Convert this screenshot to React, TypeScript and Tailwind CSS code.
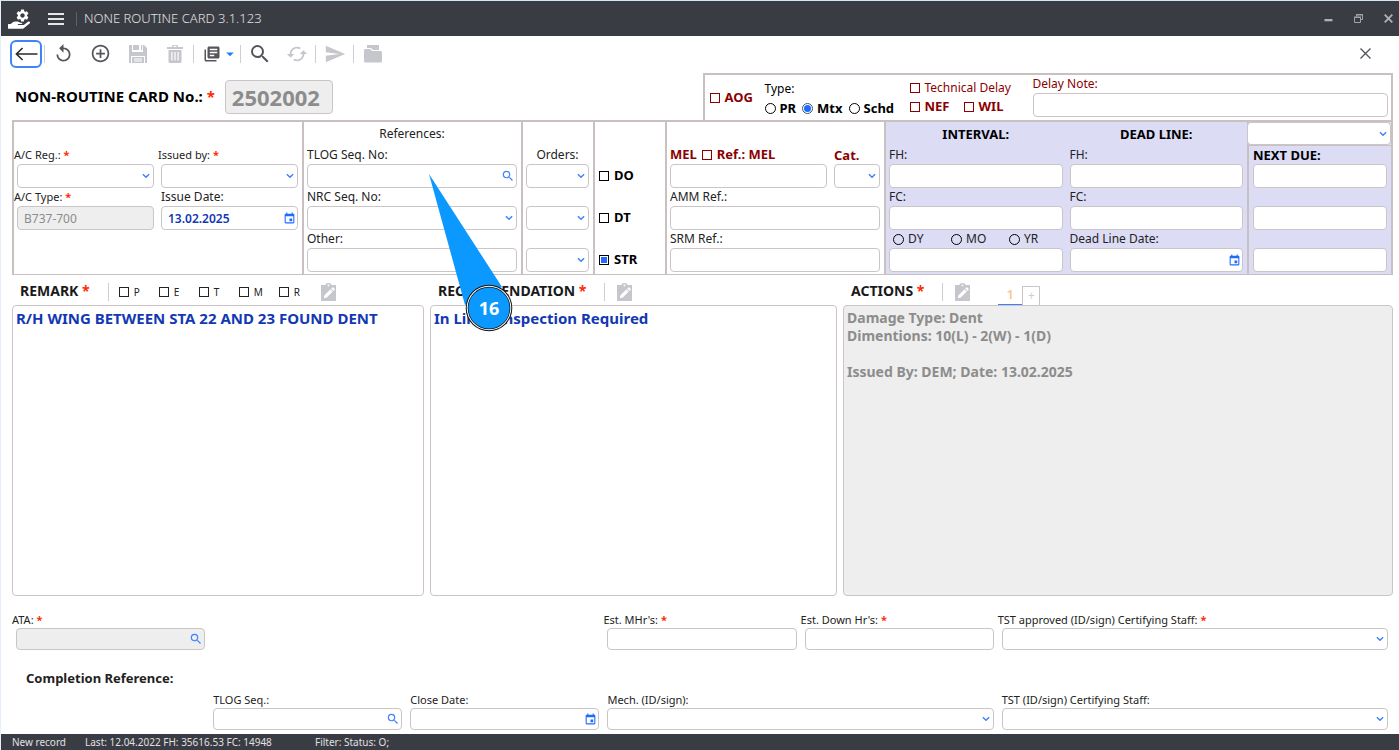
import { useId, type ReactNode } from "react";
import {
  MdAddCircleOutline,
  MdArrowDropDown,
  MdCached,
  MdEvent,
  MdLibraryBooks,
  MdReplay,
  MdSearch,
  MdSend,
  MdSettings,
} from "react-icons/md";
import { FaHandHolding } from "react-icons/fa";
import clsx from "clsx";

const Star = () => <span className="font-bold text-[#ff2a00]">*</span>;

const boxBase = "block w-full rounded border border-[#cbc5c7] px-1.5 outline-none";

type Kind = "text" | "select" | "search" | "date";

function Chevron() {
  return (
    <svg viewBox="0 0 8 6" className="h-1.5 w-2" fill="none" stroke="#3f82fb" strokeWidth="1.5">
      <path d="M0.9 1.2l3.1 3 3.1-3" />
    </svg>
  );
}

function Control({
  id,
  name,
  kind = "text",
  value = "",
  disabled = false,
  size = "h-6",
  className = "text-[13px]",
}: {
  id?: string;
  name?: string;
  kind?: Kind;
  value?: string;
  disabled?: boolean;
  size?: string;
  className?: string;
}) {
  const cls = clsx(boxBase, size, className, disabled ? "bg-[#eeeeee] text-[#8c8c8c]" : "bg-white");
  return (
    <div className="relative w-full">
      {kind === "select" ? (
        <select id={id} aria-label={name} className={clsx(cls, "appearance-none")} defaultValue="">
          <option value="" />
        </select>
      ) : (
        <input id={id} aria-label={name} type="text" className={cls} defaultValue={value} readOnly={disabled} />
      )}
      {kind === "select" && (
        <span className="pointer-events-none absolute inset-y-0 right-1 flex items-center">
          <Chevron />
        </span>
      )}
      {kind === "search" && (
        <button type="button" aria-label="Search" className="absolute inset-y-0 right-0.5 flex items-center text-[#3f82fb]">
          <MdSearch className="size-3.5" />
        </button>
      )}
      {kind === "date" && (
        <button type="button" aria-label="Pick date" className="absolute inset-y-0 right-0.5 flex items-center text-[#1f6bff]">
          <MdEvent className="size-[13px]" />
        </button>
      )}
    </div>
  );
}

/* Labelled control used inside the upper panels. */
function Field({
  label,
  required,
  labelClass = "text-[12px]",
  wrap,
  ...rest
}: {
  label: string;
  required?: boolean;
  labelClass?: string;
  wrap?: string;
  kind?: Kind;
  value?: string;
  disabled?: boolean;
  className?: string;
}) {
  const id = useId();
  return (
    <div className={clsx("min-w-0", wrap)}>
      <label htmlFor={id} className={clsx("block h-[18px] whitespace-nowrap leading-[18px]", labelClass)}>
        {label} {required && <Star />}
      </label>
      <Control id={id} {...rest} />
    </div>
  );
}

/* Labelled control used in the lower form rows. */
function LowField({
  label,
  required,
  wrap,
  ...rest
}: {
  label: string;
  required?: boolean;
  wrap?: string;
  kind?: Kind;
  disabled?: boolean;
}) {
  const id = useId();
  return (
    <div className={clsx("min-w-0", wrap)}>
      <label htmlFor={id} className={clsx("block h-4 whitespace-nowrap text-[11px] leading-4", required && "-ml-1")}>
        {label} {required && <Star />}
      </label>
      <Control id={id} size="h-[22px]" {...rest} />
    </div>
  );
}

function Check({ label, checked, className }: { label: string; checked?: boolean; className?: string }) {
  return (
    <label className={clsx("flex items-center gap-[5px] whitespace-nowrap", className)}>
      <input
        type="checkbox"
        defaultChecked={checked}
        className="size-2.5 shrink-0 appearance-none border border-current bg-clip-content p-px checked:bg-[#1f6bff]"
      />
      {label}
    </label>
  );
}

function Radio({ label, group, checked, className }: { label: string; group: string; checked?: boolean; className?: string }) {
  return (
    <label className={clsx("flex items-center gap-1 whitespace-nowrap", className)}>
      <input
        type="radio"
        name={group}
        defaultChecked={checked}
        className="size-[11px] shrink-0 appearance-none rounded-full border border-black bg-clip-content p-px checked:border-[#44517a] checked:bg-[#1f6bff]"
      />
      {label}
    </label>
  );
}

function ClipIcon() {
  return (
    <svg viewBox="0 0 15 18" className="h-[18px] w-[15px] shrink-0">
      <path fill="#c6c7cd" d="M0 2h4.2a3.4 2.6 0 0 1 6.6 0H15v16H0z" />
      <circle cx="7.5" cy="2.4" r="0.9" fill="#fff" />
      <path fill="#fff" d="M2.8 15.3l.7-3 6-6 2.3 2.3-6 6zM10.2 5.6l1-1q.6-.5 1.2 0l1.1 1.1q.5.6 0 1.2l-1 1z" />
    </svg>
  );
}

const Sep = () => <span className="h-[18px] w-px shrink-0 bg-[#cfcfd3]" />;

function Tool({ name, off, children }: { name: string; off?: boolean; children: ReactNode }) {
  return (
    <button
      type="button"
      aria-label={name}
      disabled={off}
      className={clsx("flex h-8 w-[37px] shrink-0 items-center justify-center", off ? "text-[#c6c7cd]" : "text-[#55565c]")}
    >
      {children}
    </button>
  );
}

function TitleBar() {
  return (
    <header className="flex h-[35px] items-center bg-[#3a3c44] text-[#e0e0e2]">
      <div className="relative ml-[7px] size-[22px] shrink-0 text-white">
        <FaHandHolding className="absolute bottom-0 left-0 size-[22px]" />
        <MdSettings className="absolute right-0 top-0 size-[15px] rounded-full bg-[#3a3c44]" />
      </div>
      <button type="button" aria-label="Menu" className="ml-[18px] flex flex-col gap-[3px]">
        <span className="h-0.5 w-4 bg-[#e6e6e8]" />
        <span className="h-0.5 w-4 bg-[#e6e6e8]" />
        <span className="h-0.5 w-4 bg-[#e6e6e8]" />
      </button>
      <span className="ml-3 h-3.5 w-px bg-[#60626a]" />
      <h1 className="ml-[7px] text-[13px] font-light">NONE ROUTINE CARD 3.1.123</h1>
      <div className="ml-auto mr-1.5 flex items-center gap-[21px]">
        <button type="button" aria-label="Minimize">
          <svg viewBox="0 0 9 9" className="size-[9px]" fill="#b0b1b6">
            <path d="M0.5 5h8v2.3h-8z" />
          </svg>
        </button>
        <button type="button" aria-label="Restore">
          <svg viewBox="0 0 9 9" className="size-[9px]" fill="none" stroke="#a2a3a9">
            <path d="M0.5 3.5h6v5h-6zM0 3h7M2.5 2.5v-2h6v5h-2M2 1h7" />
          </svg>
        </button>
        <button type="button" aria-label="Close window">
          <svg viewBox="0 0 9 9" className="size-[9px]" fill="none" stroke="#b0b1b6" strokeWidth="1.8">
            <path d="M0.7 0.7l7.6 7.6M8.3 0.7L0.7 8.3" />
          </svg>
        </button>
      </div>
    </header>
  );
}

function Toolbar() {
  return (
    <div className="flex h-[37px] items-center pb-0.5 pl-[9px]">
      <button
        type="button"
        aria-label="Back"
        className="mr-0.5 flex h-7 w-8 shrink-0 items-center justify-center rounded-md border-2 border-[#3f82fb]"
      >
        <svg viewBox="0 0 23 14" className="h-3.5 w-[23px] shrink-0" fill="none" stroke="#2b2b2b" strokeWidth="1.6">
          <path d="M22.5 7H1.4M7.6 1L1.4 7l6.2 6" />
        </svg>
      </button>
      <Sep />
      <Tool name="Refresh">
        <MdReplay className="size-[21px]" />
      </Tool>
      <Tool name="Add">
        <MdAddCircleOutline className="size-[21px]" />
      </Tool>
      <Tool name="Save" off>
        <svg viewBox="0 0 18 18" className="size-[18px]">
          <path fill="currentColor" d="M0 0h3v7h11V0h1l3 3v15h-2v-7H2v7H0z" />
          <path fill="currentColor" d="M4 0h6v5H4zM12 0h1.200v5H12zM3 12h12v6H3z" />
          <path stroke="#fff" d="M5 14h8M5 16h8" />
        </svg>
      </Tool>
      <Tool name="Delete" off>
        <svg viewBox="0 0 16 18" className="h-[18px] w-4">
          <path fill="currentColor" d="M0 2h5V.8Q5 0 6 0h4q1 0 1 .8V2h5v2H0zM1.500 5h13v11.500q0 1.500-1.500 1.500H3q-1.500 0-1.500-1.500z" />
          <path stroke="#fff" strokeWidth="1.2" d="M4.900 7v8.500M8 7v8.500M11.100 7v8.500M6.500 1.300h3" />
        </svg>
      </Tool>
      <Sep />
      <button type="button" aria-label="Copy options" className="flex h-8 w-[46px] shrink-0 items-center pl-[9px] text-[#55565c]">
        <MdLibraryBooks className="size-[18px] shrink-0" />
        <MdArrowDropDown className="size-[18px] shrink-0 text-[#1f7bff]" />
      </button>
      <Sep />
      <Tool name="Find">
        <MdSearch className="size-6" />
      </Tool>
      <Tool name="Sync" off>
        <MdCached className="size-[22px]" />
      </Tool>
      <Sep />
      <Tool name="Send" off>
        <MdSend className="size-[22px]" />
      </Tool>
      <Sep />
      <Tool name="Archive" off>
        <svg viewBox="0 0 18 18" className="size-[18px]" fill="currentColor">
          <path d="M3 0h12v5H9L7 3H3zM1.500 4H6l2.200 2H16.500Q18 6 18 7.500V16q0 1.500-1.500 1.500h-15Q0 17.500 0 16V5.500Q0 4 1.500 4z" />
        </svg>
      </Tool>
      <button type="button" aria-label="Close card" className="ml-auto mr-7">
        <svg viewBox="0 0 11 11" className="size-[11px]" fill="none" stroke="#55565c" strokeWidth="1.4">
          <path d="M0.500 0.500l10 10M10.500 0.500l-10 10" />
        </svg>
      </button>
    </div>
  );
}

function CardHeader() {
  return (
    <div className="ml-[11px] mr-1.5 flex h-[47px]">
      <div className="flex min-w-0 flex-1 items-center">
        <label htmlFor="card-no" className="ml-[3px] whitespace-nowrap text-[15px] font-bold text-black">
          NON-ROUTINE CARD No.: <Star />
        </label>
        <div className="ml-2.5 w-[108px]">
          <Control id="card-no" value="2502002" disabled size="h-[34px]" className="text-[22px] font-bold" />
        </div>
      </div>
      <div className="flex w-1/2 border-2 border-b-0 border-[#c8c0c1] pl-[5px] pr-[3px] text-[#8b0000]">
        <Check label="AOG" className="w-[55px] text-[13px] font-bold" />
        <div role="radiogroup" aria-label="Type" className="w-[145px] pt-[5px] text-black">
          <div className="h-[18px] text-[12px] leading-[18px]">Type:</div>
          <div className="flex gap-1.5 text-[13px] font-bold leading-5">
            <Radio label="PR" group="type" />
            <Radio label="Mtx" group="type" checked />
            <Radio label="Schd" group="type" />
          </div>
        </div>
        <div className="w-[123px] pt-1 text-[12px]">
          <Check label="Technical Delay" className="h-[18px]" />
          <div className="flex h-5 gap-3.5 text-[13px] font-bold">
            <Check label="NEF" />
            <Check label="WIL" />
          </div>
        </div>
        <Field label="Delay Note:" wrap="flex-1" />
      </div>
    </div>
  );
}

function Callout() {
  return (
    <svg viewBox="0 0 100 160" className="pointer-events-none absolute left-[115px] top-[51px] z-10 h-40 w-[100px]" aria-hidden="true">
      <path fill="#0b98ff" d="M10 1l36 131 37-18z" />
      <circle cx="70" cy="135" r="23.300" fill="#111" />
      <circle cx="70" cy="135" r="22.300" fill="#fff" />
      <circle cx="70" cy="135" r="21.300" fill="#111" />
      <circle cx="70" cy="135" r="20.600" fill="#0b98ff" />
      <text x="70" y="142" textAnchor="middle" fill="#fff" className="text-[18px] font-bold">
        16
      </text>
    </svg>
  );
}

const cell = "min-w-0 border-l-2 border-[#c8c0c1]";

function Details() {
  return (
    <section className="ml-[11px] mr-1.5 grid grid-cols-[288fr_219fr_72fr_72fr_219fr_363fr_144fr] border-2 border-b border-[#c8c0c1]">
      <div className="grid min-w-0 grid-cols-[1fr_1fr] content-start gap-x-[7px] pl-[3px] pr-1 pt-6">
        <Field label="A/C Reg.:" required kind="select" labelClass="text-[11px] -ml-[3px]" />
        <Field label="Issued by:" required kind="select" labelClass="text-[11px] -ml-[3px]" />
        <Field
          label="A/C Type:"
          required
          value="B737-700"
          disabled
          labelClass="text-[11px] -ml-[3px]"
          className="text-[12px]"
        />
        <Field label="Issue Date:" kind="date" value="13.02.2025" className="text-[12px] font-semibold text-[#1238b4]" />
      </div>

      <div className={clsx(cell, "relative pb-0.5 pl-[3px] pr-1")}>
        <h2 className="h-6 text-center text-[12px] leading-6">References:</h2>
        <Field label="TLOG Seq. No:" kind="search" />
        <Field label="NRC Seq. No:" kind="select" />
        <Field label="Other:" />
        <Callout />
      </div>

      <div className={clsx(cell, "pl-[3px] pr-1 pt-6")}>
        <Field label="Orders:" kind="select" labelClass="text-[12px] text-center" />
        <div className="pt-[18px]">
          <Control name="Order 2" kind="select" />
        </div>
        <div className="pt-[18px]">
          <Control name="Order 3" kind="select" />
        </div>
      </div>

      <div className={clsx(cell, "flex flex-col gap-[18px] pl-1 pt-[42px] text-[13px] font-bold text-black")}>
        <Check label="DO" className="h-6" />
        <Check label="DT" className="h-6" />
        <Check label="STR" checked className="h-6" />
      </div>

      <div className={clsx(cell, "pl-[3px] pr-1 pt-6")}>
        <div className="flex gap-[7px] text-[#8b0000]">
          <div className="min-w-0 flex-1">
            <div className="flex h-[18px] items-center gap-[5px] whitespace-nowrap text-[13px] font-bold">
              <span>MEL</span>
              <Check label="Ref.: MEL" />
            </div>
            <Control name="MEL reference" />
          </div>
          <Field label="Cat." kind="select" wrap="w-[46px]" labelClass="text-[13px] font-bold" />
        </div>
        <Field label="AMM Ref.:" />
        <Field label="SRM Ref.:" />
      </div>

      <div className={clsx(cell, "grid grid-cols-2 content-start gap-x-[7px] bg-[#dddcf5] pl-[3px] pr-1")}>
        <h2 className="h-6 text-center text-[13px] font-bold leading-6 text-black">INTERVAL:</h2>
        <h2 className="h-6 text-center text-[13px] font-bold leading-6 text-black">DEAD LINE:</h2>
        <Field label="FH:" />
        <Field label="FH:" />
        <Field label="FC:" />
        <Field label="FC:" />
        <div className="min-w-0">
          <div className="flex h-[18px] items-center pl-1 text-[12px]">
            <Radio label="DY" group="unit" className="w-[58px]" />
            <Radio label="MO" group="unit" className="w-[58px]" />
            <Radio label="YR" group="unit" />
          </div>
          <Control name="Interval value" />
        </div>
        <Field label="Dead Line Date:" kind="date" />
      </div>

      <div className={clsx(cell, "bg-[#dddcf5]")}>
        <div className="-ml-0.5 border-b border-[#c8c0c1]">
          <Control name="Next due basis" kind="select" size="h-[23px]" />
        </div>
        <div className="px-1">
          <Field label="NEXT DUE:" labelClass="text-[13px] font-bold text-black" />
          <div className="pt-[18px]">
            <Control name="Next due 2" />
          </div>
          <div className="pt-[18px]">
            <Control name="Next due 3" />
          </div>
        </div>
      </div>
    </section>
  );
}

function NotePanel({
  title,
  id,
  text,
  disabled,
  children,
}: {
  title: string;
  id: string;
  text: string;
  disabled?: boolean;
  children?: ReactNode;
}) {
  return (
    <div className="flex min-w-0 flex-col">
      <div className="flex h-[30px] items-stretch pl-2">
        <label htmlFor={id} className="whitespace-nowrap pt-[3px] text-[14px] font-bold leading-[26px] text-[#1a1a1a]">
          {title} <Star />
        </label>
        <span className="ml-[18px] mt-2 h-[18px] w-px bg-[#cfcfd3]" />
        {children}
      </div>
      <textarea
        id={id}
        readOnly={disabled}
        defaultValue={text}
        className={clsx(
          "min-h-40 w-full flex-1 resize-none overflow-hidden rounded border border-[#cbc5c7] px-[3px] pt-[3px] font-bold leading-[18px] outline-none",
          disabled ? "bg-[#eeeeee] text-[14px] text-[#8c8c8c]" : "bg-white text-[15px] text-[#1238b4]",
        )}
      />
    </div>
  );
}

function EditNote({ className }: { className?: string }) {
  return (
    <button type="button" aria-label="Edit note" className={clsx("pt-1", className)}>
      <ClipIcon />
    </button>
  );
}

function Notes() {
  return (
    <section className="ml-[11px] mr-1.5 grid flex-1 grid-cols-[412fr_407fr_550fr] gap-x-1.5">
      <NotePanel title="REMARK" id="remark" text="R/H WING BETWEEN STA 22 AND 23 FOUND DENT">
        <div className="ml-2.5 flex pt-1 text-[10px]">
          {["P", "E", "T", "M", "R"].map((c) => (
            <Check key={c} label={c} className="w-10" />
          ))}
        </div>
        <EditNote className="ml-0.5" />
      </NotePanel>
      <NotePanel title="RECOMMENDATION" id="recommendation" text="In Line - Inspection Required">
        <EditNote className="ml-3" />
      </NotePanel>
      <NotePanel
        title="ACTIONS"
        id="actions"
        disabled
        text={"Damage Type: Dent\nDimentions: 10(L) - 2(W) - 1(D)\n\nIssued By: DEM; Date: 13.02.2025"}
      >
        <EditNote className="ml-3" />
        <div className="ml-7 flex items-end">
          <button type="button" className="h-[21px] w-6 border-b border-[#3f82fb] text-[13px] font-semibold leading-5 text-[#ffc591]">
            1
          </button>
          <button
            type="button"
            aria-label="Add action"
            className="h-[19px] w-[18px] border border-b-0 border-[#cbc5c7] text-[12px] leading-[18px] text-[#cfcfcf]"
          >
            +
          </button>
        </div>
      </NotePanel>
    </section>
  );
}

function Completion() {
  return (
    <section className="mb-1 ml-[15px] mr-[11px] mt-4">
      <div className="grid grid-cols-7 gap-x-2">
        <LowField label="ATA:" required kind="search" disabled />
        <LowField label="Est. MHr's:" required wrap="col-start-4" />
        <LowField label="Est. Down Hr's:" required />
        <LowField label="TST approved (ID/sign) Certifying Staff:" required kind="select" wrap="col-span-2" />
      </div>
      <h2 className="ml-2.5 h-[42px] pt-[19px] text-[13px] font-bold leading-[18px]">Completion Reference:</h2>
      <div className="grid grid-cols-7 gap-x-2">
        <LowField label="TLOG Seq.:" kind="search" wrap="col-start-2" />
        <LowField label="Close Date:" kind="date" />
        <LowField label="Mech. (ID/sign):" kind="select" wrap="col-span-2" />
        <LowField label="TST (ID/sign) Certifying Staff:" kind="select" wrap="col-span-2" />
      </div>
    </section>
  );
}

export default function App() {
  return (
    <div className="flex min-h-screen flex-col border-l border-t border-l-[#e6eefb] border-t-[#d3e6f2] bg-white font-['Noto_Sans','Open_Sans',sans-serif] text-[#222222]">
      <TitleBar />
      <Toolbar />
      <CardHeader />
      <Details />
      <Notes />
      <Completion />
      <footer className="flex h-4 items-center whitespace-nowrap bg-[#3a3c44] pl-[11px] text-[10px] leading-4 text-[#e0e0e2]">
        <span className="w-[73px]">New record</span>
        <span className="w-[230px]">Last: 12.04.2022 FH: 35616.53 FC: 14948</span>
        <span>Filter: Status: O;</span>
      </footer>
    </div>
  );
}
